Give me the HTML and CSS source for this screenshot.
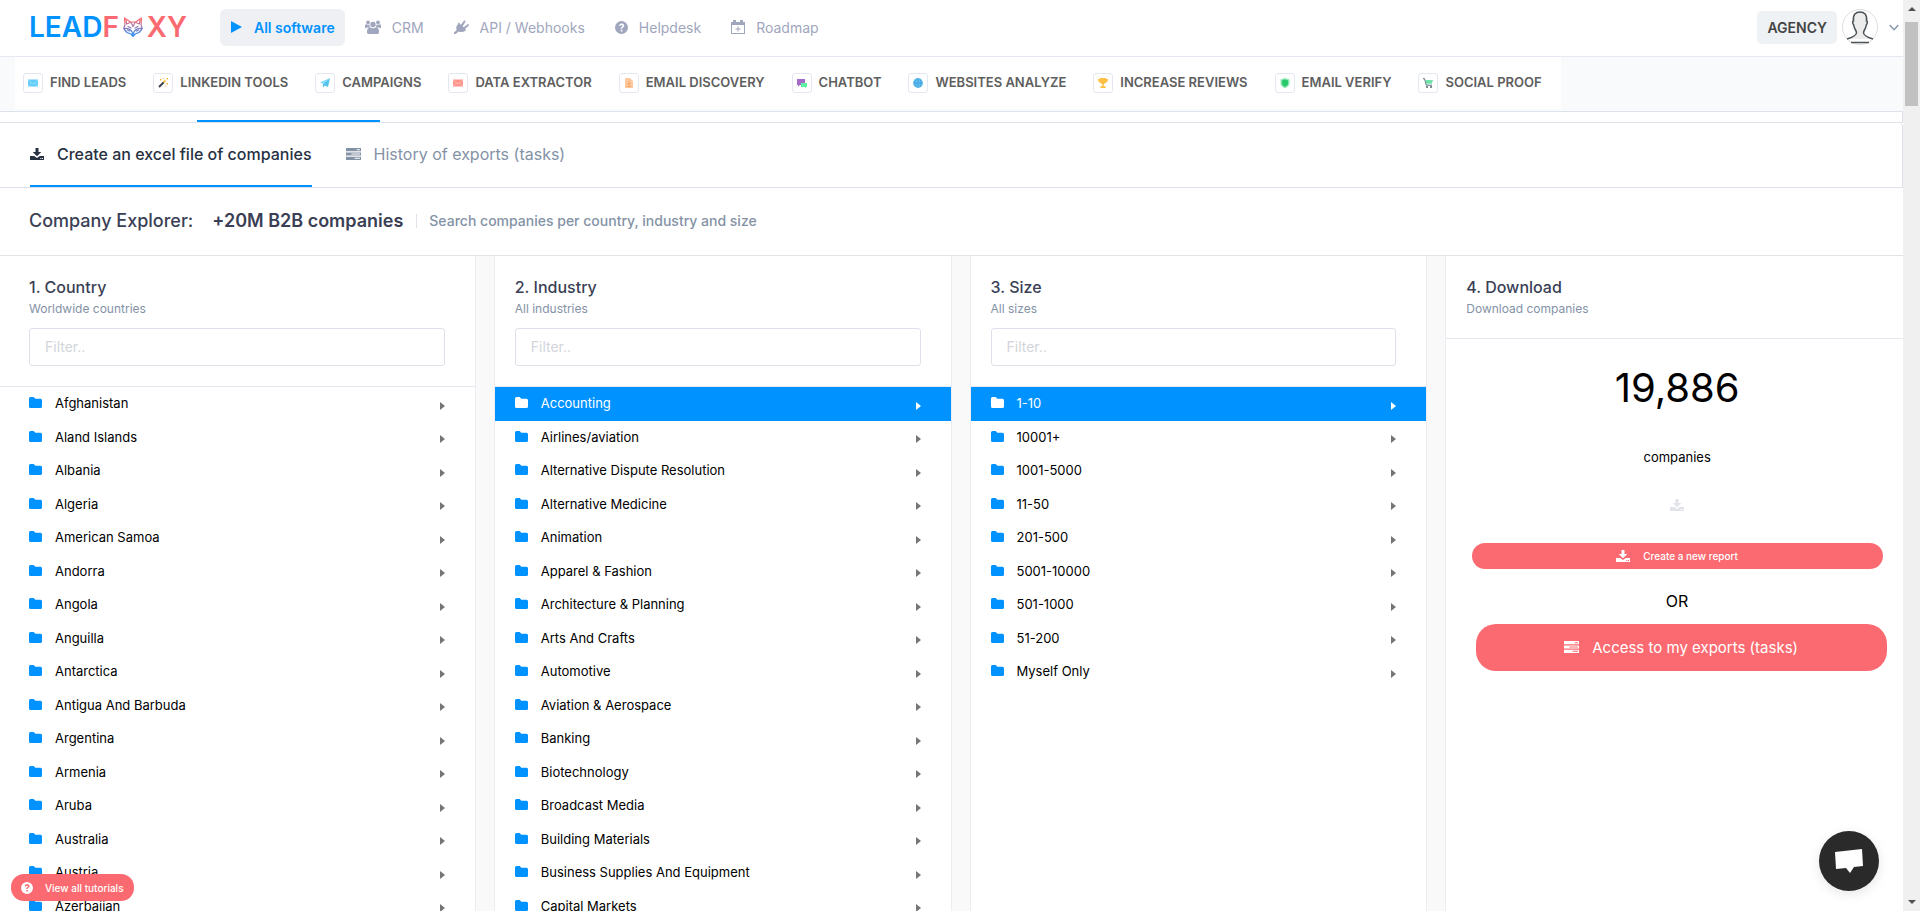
FILE: index.html
```html
<!DOCTYPE html>
<html lang="en">
<head>
    <meta charset="utf-8">
    <title>LeadFoxy - Company Explorer</title>
    <link rel="stylesheet" href="styles.css">
</head>
<body>

<svg class="sprite" aria-hidden="true">
    <symbol id="folder" viewBox="0 0 13 11"><path d="M1.5 0h3.2l1.6 1.7h5.2A1.5 1.5 0 0 1 13 3.2v6.3a1.5 1.5 0 0 1-1.5 1.5h-10A1.5 1.5 0 0 1 0 9.5v-8A1.5 1.5 0 0 1 1.5 0z"/></symbol>
    <symbol id="download" viewBox="0 0 14 12"><path d="M5.5 0h3v4h2.8L7 8.3 2.7 4h2.8zM0 8h4.2L7 10l2.8-2H14v4H0zm10.300 2v1h1v-1zm1.700 0v1h1v-1z" fill-rule="evenodd"/></symbol>
    <symbol id="tasks" viewBox="0 0 14 11"><path d="M0 0h14v3H0zm10 1v1h3V1zM0 4h14v3H0zm5 1v1h8V5zM0 8h14v3H0zm8 1v1h5V9z" fill-rule="evenodd"/></symbol>
    <symbol id="question" viewBox="0 0 13 13"><path d="M6.500 0a6.500 6.500 0 1 1 0 13 6.500 6.500 0 0 1 0-13zM3.900 4.400l1.400.7c.3-.7.700-1 1.200-1 1.300 0 1.300 1.100.4 1.600-.8.500-1.200 1-1.200 2h1.600c0-.7.3-.9 1-1.400C10.200 4.800 9 2.400 6.600 2.400c-1.300 0-2.200.7-2.700 2zM5.700 8.700v1.700h1.700V8.700z" fill-rule="evenodd"/></symbol>
</svg>

<div class="page">
    <header class="topbar">
        <a href="#" class="logo" aria-label="Leadfoxy">
            <span class="logo-blue">LEAD</span><span class="logo-red">F</span>
            <svg class="fox" viewBox="0 0 20 20" stroke-width="1.200" stroke-linejoin="round" stroke-linecap="round">
                <defs><linearGradient id="foxline" x1="0" y1="0" x2="0" y2="1"><stop offset="0.1" stop-color="#fb6a70"/><stop offset="0.9" stop-color="#2a86f0"/></linearGradient></defs>
                <path fill="none" stroke="url(#foxline)" d="M1.500 1 2 8 .7 11.500 4 15.500l4 1.500 2 2.300 2-2.300 4-1.500 3.300-4L18 8l.5-7L12.500 5h-5zM3 3l.7 4L7 5.500M17 3l-.7 4L13 5.500M1 11.500c4-.5 8 1 9 6 1-5 5-6.500 9-6M5 9.500l3 1.500M15 9.500l-3 1.500M8 5.500l2 4 2-4M4.500 13l2 1M15.500 13l-2 1"/>
            </svg>
            <span class="logo-red">XY</span>
        </a>
        <nav class="main-nav">
            <a href="#" class="active"><svg width="17" height="14" viewBox="0 0 17 14"><path d="M1 1v12l11-6z"/></svg>All software</a>
            <a href="#"><svg width="16" height="14" viewBox="0 0 16 14"><circle cx="3" cy="2.300" r="1.900"/><circle cx="13" cy="2.300" r="1.900"/><circle cx="8" cy="4.500" r="2.700"/><path d="M0 8V6c0-1.300.7-1.800 1.600-1.800C3 5 4 4.600 4.500 4.600c0 1.400.2 2.200 1 3H2C.8 8.500 0 8.400 0 8zM16 8V6c0-1.300-.7-1.800-1.600-1.800-1.400.8-2.400.4-2.900.4 0 1.400-.2 2.200-1 3H14c1.200.9 2 .8 2 .4zM3 14c-1-.3-1-1.500-1-2.500C2 9 3.200 7.500 5 7.500c2 1 4 1 6 0 1.800 0 3 1.500 3 4 0 1 0 2.200-1 2.500z"/></svg>CRM</a>
            <a href="#"><svg width="15" height="14" viewBox="0 0 15 14"><path d="M0 14v-1.500l2.700-2.600C2 8 2 6.300 3.500 4.800l1-1 2 1.800L9.700 1c1-1 2.300-.2 1.600 1L8.700 6.200l1.100 1 3.500-2.800c1.200-.9 2 .6 1.200 1.400L11 9l1 1.300-1 .8c-1.800 1.200-4.500 1.400-6.400.3L1.800 14zM3.700 3.500l1-1 7 7-1 1z"/></svg>API / Webhooks</a>
            <a href="#"><svg width="13" height="13"><use href="#question"/></svg>Helpdesk</a>
            <a href="#"><svg width="14" height="14" viewBox="0 0 14 14"><path d="M0 2h2V0h3v2h4V0h3v2h2v12H0zm1 3v8h12V5zm5.500 1.500h1v2h2v1h-2v2h-1v-2h-2v-1h2z" fill-rule="evenodd"/></svg>Roadmap</a>
        </nav>
        <div class="account">
            <button type="button" class="plan">AGENCY</button>
            <svg class="avatar" viewBox="0 0 36 36"><circle cx="18" cy="18" r="17.500" fill="#fff" stroke="#dcdcdc"/><path d="M5 30c5-1.500 9-3 9.500-6 0-3-2.500-4-2.800-8C10.500 14 10 12 11.500 12 10.500 5.500 14 3 18 3s7.500 2.500 6.500 9c1.500 0 1 2-.2 4-.3 4-2.800 5-2.800 8 .5 3 4.500 4.500 9.500 6M9 33.500h18" fill="#ececec" stroke="#4b5358" stroke-width="1.500"/></svg>
            <svg class="chevron" viewBox="0 0 10 7"><path d="m.7 1 4.300 4.700L9.300 1" fill="none" stroke="#8492a6" stroke-width="1.300"/></svg>
        </div>
    </header>

    <div class="toolbar">
        <nav class="tools">
            <a href="#"><span class="tool-icon"><svg viewBox="0 0 10 10"><path fill="#62cdfa" d="M0 1.500h10v7H0z"/><path d="m0 2 5 4 5-4M0 8l3.500-3M10 8 6.500 5" fill="none" stroke="#a4e4ff" stroke-width=".7"/></svg></span>FIND LEADS</a>
            <a href="#"><span class="tool-icon"><svg viewBox="0 0 10 10"><path d="m1 9 5-5" stroke="#3c4350" stroke-width="1.900"/><path d="m5.500 4.500 2-2" stroke="#ffc348" stroke-width="1.900"/><path fill="#ffb53c" d="M2 1h1.500v1.500H2zM8.500 0H10v1.500H8.500zM8.500 5H10v1.500H8.500zM5 0h1v1H5zM7 7.500h1v1H7z"/></svg></span>LINKEDIN TOOLS</a>
            <a href="#"><span class="tool-icon"><svg viewBox="0 0 10 10"><path fill="#79d9fa" d="M10 0 0 4.500l3 1.300z"/><path fill="#55c4ec" d="M10 0 3 6v3.500l1.800-2L8 9z"/></svg></span>CAMPAIGNS</a>
            <a href="#"><span class="tool-icon"><svg viewBox="0 0 10 10"><path fill="#ff938a" d="M0 1.500h10v7H0z"/><path d="m0 2 5 4 5-4M0 8l3.500-3M10 8 6.500 5" fill="none" stroke="#ffc9c3" stroke-width=".7"/></svg></span>DATA EXTRACTOR</a>
            <a href="#"><span class="tool-icon"><svg viewBox="0 0 10 10"><path fill="#ffc9a0" d="M1 0h5l3 3v7H1z"/><path d="M5 3.500V7M3.500 5.500 5 7l1.500-1.500M3 8.500h4" fill="none" stroke="#f4984f" stroke-width=".8"/></svg></span>EMAIL DISCOVERY</a>
            <a href="#"><span class="tool-icon"><svg viewBox="0 0 10 10"><path fill="#a569c8" d="M0 1h8v6H3L1 8.500V7H0z"/><path fill="#5cf2a0" d="M4 5h6v4H9v1L7.500 9H4z"/></svg></span>CHATBOT</a>
            <a href="#"><span class="tool-icon"><svg viewBox="0 0 10 10"><circle cx="5" cy="5" r="4.900" fill="#5fbdf0"/><path d="M5 0v10M.5 5h9M3 1c-1.300 2.500-1.300 5.500 0 8M7 1c1.300 2.500 1.300 5.500 0 8" fill="none" stroke="#3a9bd8" stroke-width=".6"/></svg></span>WEBSITES ANALYZE</a>
            <a href="#"><span class="tool-icon"><svg viewBox="0 0 10 10"><path fill="#ffc145" d="M2 0h6v1h2c0 2.500-1 3.500-2.500 3.800L5.700 6.500V8H7.500v2h-5V8h1.800V6.500L2.500 4.800C1 4.500 0 3.500 0 1h2z"/></svg></span>INCREASE REVIEWS</a>
            <a href="#"><span class="tool-icon"><svg viewBox="0 0 10 10"><path fill="#8be7b0" d="M5 0 9.500 1.500V6C9 8 7 9.500 5 10 3 9.500 1 8 .5 6V1.500z"/><path fill="#27c96a" d="M5 1.500 8 2.500V6C7.500 7.500 6 8.300 5 8.700 4 8.300 2.500 7.500 2 6V2.500z"/></svg></span>EMAIL VERIFY</a>
            <a href="#"><span class="tool-icon"><svg viewBox="0 0 10 10"><path d="M0 .7h1.500l1.800 6.500H9" fill="none" stroke="#5b7083"/><path fill="#6fe3a8" d="M2.300 2H10L8.700 5.800H3.300z"/><circle cx="4" cy="9" r=".9" fill="#44525f"/><circle cx="8" cy="9" r=".9" fill="#44525f"/></svg></span>SOCIAL PROOF</a>
        </nav>
    </div>

    <div class="outer-tabs"><span class="outer-line"></span></div>

    <nav class="tabs">
        <a href="#" class="active"><svg width="14" height="12"><use href="#download"/></svg>Create an excel file of companies</a>
        <a href="#"><svg width="15" height="12"><use href="#tasks"/></svg>History of exports (tasks)</a>
    </nav>

    <div class="title-bar">
        <h1>Company Explorer:</h1>
        <strong>+20M B2B companies</strong>
        <p>Search companies per country, industry and size</p>
    </div>

    <main class="columns">
        <section class="column">
            <div class="column-head">
                <h2>1. Country</h2>
                <label for="filter-country">Worldwide countries</label>
                <input type="text" id="filter-country" placeholder="Filter..">
            </div>
            <ul class="list">
                <li><a href="#"><svg><use href="#folder"/></svg>Afghanistan</a></li>
                <li><a href="#"><svg><use href="#folder"/></svg>Aland Islands</a></li>
                <li><a href="#"><svg><use href="#folder"/></svg>Albania</a></li>
                <li><a href="#"><svg><use href="#folder"/></svg>Algeria</a></li>
                <li><a href="#"><svg><use href="#folder"/></svg>American Samoa</a></li>
                <li><a href="#"><svg><use href="#folder"/></svg>Andorra</a></li>
                <li><a href="#"><svg><use href="#folder"/></svg>Angola</a></li>
                <li><a href="#"><svg><use href="#folder"/></svg>Anguilla</a></li>
                <li><a href="#"><svg><use href="#folder"/></svg>Antarctica</a></li>
                <li><a href="#"><svg><use href="#folder"/></svg>Antigua And Barbuda</a></li>
                <li><a href="#"><svg><use href="#folder"/></svg>Argentina</a></li>
                <li><a href="#"><svg><use href="#folder"/></svg>Armenia</a></li>
                <li><a href="#"><svg><use href="#folder"/></svg>Aruba</a></li>
                <li><a href="#"><svg><use href="#folder"/></svg>Australia</a></li>
                <li><a href="#"><svg><use href="#folder"/></svg>Austria</a></li>
                <li><a href="#"><svg><use href="#folder"/></svg>Azerbaijan</a></li>
            </ul>
        </section>

        <section class="column">
            <div class="column-head">
                <h2>2. Industry</h2>
                <label for="filter-industry">All industries</label>
                <input type="text" id="filter-industry" placeholder="Filter..">
            </div>
            <ul class="list">
                <li><a href="#" class="selected"><svg><use href="#folder"/></svg>Accounting</a></li>
                <li><a href="#"><svg><use href="#folder"/></svg>Airlines/aviation</a></li>
                <li><a href="#"><svg><use href="#folder"/></svg>Alternative Dispute Resolution</a></li>
                <li><a href="#"><svg><use href="#folder"/></svg>Alternative Medicine</a></li>
                <li><a href="#"><svg><use href="#folder"/></svg>Animation</a></li>
                <li><a href="#"><svg><use href="#folder"/></svg>Apparel &amp; Fashion</a></li>
                <li><a href="#"><svg><use href="#folder"/></svg>Architecture &amp; Planning</a></li>
                <li><a href="#"><svg><use href="#folder"/></svg>Arts And Crafts</a></li>
                <li><a href="#"><svg><use href="#folder"/></svg>Automotive</a></li>
                <li><a href="#"><svg><use href="#folder"/></svg>Aviation &amp; Aerospace</a></li>
                <li><a href="#"><svg><use href="#folder"/></svg>Banking</a></li>
                <li><a href="#"><svg><use href="#folder"/></svg>Biotechnology</a></li>
                <li><a href="#"><svg><use href="#folder"/></svg>Broadcast Media</a></li>
                <li><a href="#"><svg><use href="#folder"/></svg>Building Materials</a></li>
                <li><a href="#"><svg><use href="#folder"/></svg>Business Supplies And Equipment</a></li>
                <li><a href="#"><svg><use href="#folder"/></svg>Capital Markets</a></li>
            </ul>
        </section>

        <section class="column">
            <div class="column-head">
                <h2>3. Size</h2>
                <label for="filter-size">All sizes</label>
                <input type="text" id="filter-size" placeholder="Filter..">
            </div>
            <ul class="list">
                <li><a href="#" class="selected"><svg><use href="#folder"/></svg>1-10</a></li>
                <li><a href="#"><svg><use href="#folder"/></svg>10001+</a></li>
                <li><a href="#"><svg><use href="#folder"/></svg>1001-5000</a></li>
                <li><a href="#"><svg><use href="#folder"/></svg>11-50</a></li>
                <li><a href="#"><svg><use href="#folder"/></svg>201-500</a></li>
                <li><a href="#"><svg><use href="#folder"/></svg>5001-10000</a></li>
                <li><a href="#"><svg><use href="#folder"/></svg>501-1000</a></li>
                <li><a href="#"><svg><use href="#folder"/></svg>51-200</a></li>
                <li><a href="#"><svg><use href="#folder"/></svg>Myself Only</a></li>
            </ul>
        </section>

        <section class="column">
            <div class="column-head">
                <h2>4. Download</h2>
                <p>Download companies</p>
            </div>
            <div class="download">
                <p class="total">19,886</p>
                <p class="unit">companies</p>
                <svg class="download-icon"><use href="#download"/></svg>
                <button type="button" class="btn btn-small"><svg width="14" height="12"><use href="#download"/></svg>Create a new report</button>
                <p class="or">OR</p>
                <button type="button" class="btn btn-large"><svg width="15" height="12"><use href="#tasks"/></svg>Access to my exports (tasks)</button>
            </div>
        </section>
    </main>
</div>

<div class="scrollbar">
    <svg viewBox="0 0 8 4"><path d="M0 4 4 0l4 4z"/></svg>
    <span class="thumb"></span>
    <svg viewBox="0 0 8 4"><path d="m0 0 4 4 4-4z"/></svg>
</div>

<button type="button" class="tutorials"><svg width="12" height="12" viewBox="0 0 13 13"><use href="#question"/></svg>View all tutorials</button>
<button type="button" class="chat" aria-label="Chat"><svg viewBox="0 0 30 26"><path d="M1 4 28 1l1 17-9 1-4 6-4-5-10 1z"/></svg></button>

</body>
</html>
```
FILE: styles.css
```css
* {
    box-sizing: border-box;
}

body {
    display: flex;
    height: 100vh;
    margin: 0;
    overflow: hidden;
    font-family: Inter, "Liberation Sans", sans-serif;
    font-size: 13px;
    line-height: 1.5;
    color: #000;
    background: #fff;
}

h1, h2, p, ul {
    margin: 0;
    padding: 0;
}

a {
    color: inherit;
    text-decoration: none;
}

button, input {
    font-family: inherit;
}

button {
    border: 0;
    cursor: pointer;
}

svg {
    flex: none;
    fill: currentColor;
}

.sprite {
    display: none;
}

.page {
    display: flex;
    flex-direction: column;
    flex: 1;
    min-width: 0;
}

/* top bar */
.topbar {
    display: flex;
    align-items: center;
    flex: none;
    height: 57px;
    padding: 0 4px 2px 29px;
    border-bottom: 1px solid #e5e8f0;
}

.logo {
    display: flex;
    align-items: center;
    width: 162px;
    font-size: 28px;
    line-height: 30px;
    font-weight: 600;
}

.logo-blue {
    color: #0092ff;
}

.logo-red {
    color: #fb6a70;
}

.fox {
    width: 20px;
    height: 20px;
    margin: 0 4px;
}

.main-nav {
    display: flex;
    align-items: center;
    gap: 10px;
    margin-left: 29px;
}

.main-nav a {
    display: flex;
    align-items: center;
    gap: 11px;
    height: 37px;
    padding: 0 10px;
    border-radius: 6px;
    font-size: 14px;
    color: #a0a6bd;
}

.main-nav .active {
    gap: 7px;
    background: #eff0f4;
    color: #0092ff;
    font-weight: 600;
}

.account {
    display: flex;
    align-items: center;
    margin-left: auto;
}

.plan {
    height: 33px;
    padding: 0 10px;
    border-radius: 5px;
    background: #eff2f5;
    color: #444;
    font-size: 14px;
    font-weight: 600;
}

.avatar {
    width: 36px;
    height: 36px;
    margin: 0 11px 0 5px;
}

.chevron {
    width: 10px;
    height: 7px;
}

/* tools */
.toolbar {
    flex: none;
    height: 55px;
    padding: 0 15px;
    background: #f9fafc;
    border-bottom: 1px solid #dde3ea;
}

.tools {
    display: inline-flex;
    align-items: center;
    gap: 27px;
    height: 52px;
    padding: 0 19px 0 8px;
    background: #fff;
}

.tools a {
    display: flex;
    align-items: center;
    gap: 7px;
    color: #5e5e5e;
    font-size: 13px;
    font-weight: 600;
    white-space: nowrap;
}

.tool-icon {
    display: flex;
    align-items: center;
    justify-content: center;
    width: 20px;
    height: 20px;
    border: 1px solid #e4e7ef;
    border-radius: 3px;
}

.tool-icon svg {
    width: 10px;
    height: 10px;
}

/* tabs */
.outer-tabs {
    display: flex;
    align-items: flex-end;
    flex: none;
    height: 11px;
    padding-left: 197px;
    border-bottom: 1px solid #dfe1ea;
    border-right: 1px solid #dfe1ea;
}

.outer-line {
    width: 183px;
    height: 2px;
    background: #0092ff;
}

.tabs {
    display: flex;
    gap: 34px;
    flex: none;
    height: 65px;
    padding-left: 30px;
    border: solid #dfe1ea;
    border-width: 0 1px 1px 0;
    border-top-right-radius: 4px;
}

.tabs a {
    display: flex;
    align-items: center;
    gap: 13px;
    border-bottom: 2px solid transparent;
    font-size: 16px;
    color: #8492a6;
}

.tabs .active {
    border-color: #0092ff;
    color: #273142;
    font-weight: 500;
}

/* title */
.title-bar {
    display: flex;
    align-items: center;
    flex: none;
    height: 68px;
    padding: 0 29px 2px;
    border-bottom: 1px solid #e2e2e8;
    color: #3a3f55;
    font-size: 18px;
}

.title-bar h1 {
    margin-right: 19px;
    font-size: 18px;
    font-weight: 500;
}

.title-bar strong {
    font-weight: 600;
}

.title-bar p {
    margin-left: 13px;
    padding-left: 12px;
    border-left: 1px solid #e2e2ea;
    color: #8492a6;
    font-size: 14px;
    line-height: 14px;
    font-weight: 500;
}

/* explorer columns */
.columns {
    display: grid;
    grid-template-columns: repeat(4, 1fr);
    flex: 1;
    min-height: 0;
    background: #f9f9f9;
}

.column {
    display: flex;
    flex-direction: column;
    min-height: 0;
    overflow: hidden;
    margin-left: 18px;
    border: solid #ebedf2;
    border-width: 0 1px;
    background: #fff;
}

.column:first-child {
    margin-left: 0;
    border-left: 0;
}

.column:last-child {
    border-right: 0;
}

.column-head {
    padding: 19px 30px 20px 20px;
    border-bottom: 1px solid #e7e8ef;
    color: #8492a6;
    font-size: 12px;
    line-height: 18px;
}

.column:first-child .column-head,
.column:first-child .list a {
    padding-left: 29px;
}

.column-head h2 {
    margin-bottom: 1px;
    color: #3a3f55;
    font-size: 16px;
    line-height: 24px;
    font-weight: 500;
}

.column-head label {
    display: block;
}

.column-head input {
    width: 100%;
    height: 38px;
    margin-top: 10px;
    padding: 0 15px 2px;
    border: 1px solid #dfe1ea;
    border-radius: 3px;
    font-size: 14px;
}

.column-head input::placeholder {
    color: #d3d5da;
}

.list {
    list-style: none;
}

.list a {
    display: flex;
    align-items: center;
    padding: 7px 30px 7px 20px;
}

.list svg {
    width: 13px;
    height: 11px;
    margin: 0 13px 2px 0;
    color: #0092ff;
}

.list a::after {
    content: "";
    margin-left: auto;
    margin-top: 4px;
    border: solid transparent;
    border-width: 4px 0 4px 5px;
    border-left-color: #757575;
}

.list .selected {
    background: #0092ff;
    color: #fff;
}

.list .selected svg {
    color: #fff;
}

.list .selected::after {
    border-left-color: #fff;
}

/* download */
.download {
    display: flex;
    flex-direction: column;
    align-items: center;
    padding: 19px 0 0 5px;
}

.total {
    font-size: 40px;
    line-height: 60px;
}

.unit {
    margin-top: 29px;
    line-height: 20px;
}

.download-icon {
    width: 14px;
    height: 12px;
    margin: 32px 0;
    color: #e1e2ea;
}

.btn {
    display: flex;
    align-items: center;
    justify-content: center;
    gap: 13px;
    width: 91%;
    background: #fb6a70;
    color: #fff;
}

.btn-small {
    height: 26px;
    border-radius: 13px;
    font-size: 10px;
    font-weight: 500;
}

.or {
    margin: 20px 0 11px;
    font-size: 16px;
    line-height: 24px;
}

.btn-large {
    height: 47px;
    margin-left: 8px;
    padding-bottom: 2px;
    border-radius: 20px;
    font-size: 15px;
}

/* scrollbar */
.scrollbar {
    display: flex;
    flex-direction: column;
    align-items: center;
    flex: none;
    width: 17px;
    padding: 7px 0;
    background: #f0f0f0;
    color: #505050;
}

.scrollbar svg {
    width: 8px;
    height: 4px;
}

.thumb {
    width: 13px;
    height: 84px;
    margin: 11px 0 auto;
    background: #c1c1c1;
}

/* floating buttons */
.tutorials {
    position: fixed;
    left: 11px;
    bottom: 10px;
    display: flex;
    align-items: center;
    gap: 12px;
    height: 27px;
    padding: 0 10px;
    border-radius: 13px;
    background: #fb6a70;
    color: #fff;
    font-size: 10px;
    font-weight: 500;
}

.chat {
    position: fixed;
    right: 41px;
    bottom: 20px;
    display: flex;
    align-items: center;
    justify-content: center;
    width: 60px;
    height: 60px;
    padding: 0;
    border-radius: 50%;
    background: #2a2a2a;
    color: #fff;
    box-shadow: 0 3px 12px rgba(0, 0, 0, 0.1);
}

.chat svg {
    width: 30px;
    height: 26px;
}
```
